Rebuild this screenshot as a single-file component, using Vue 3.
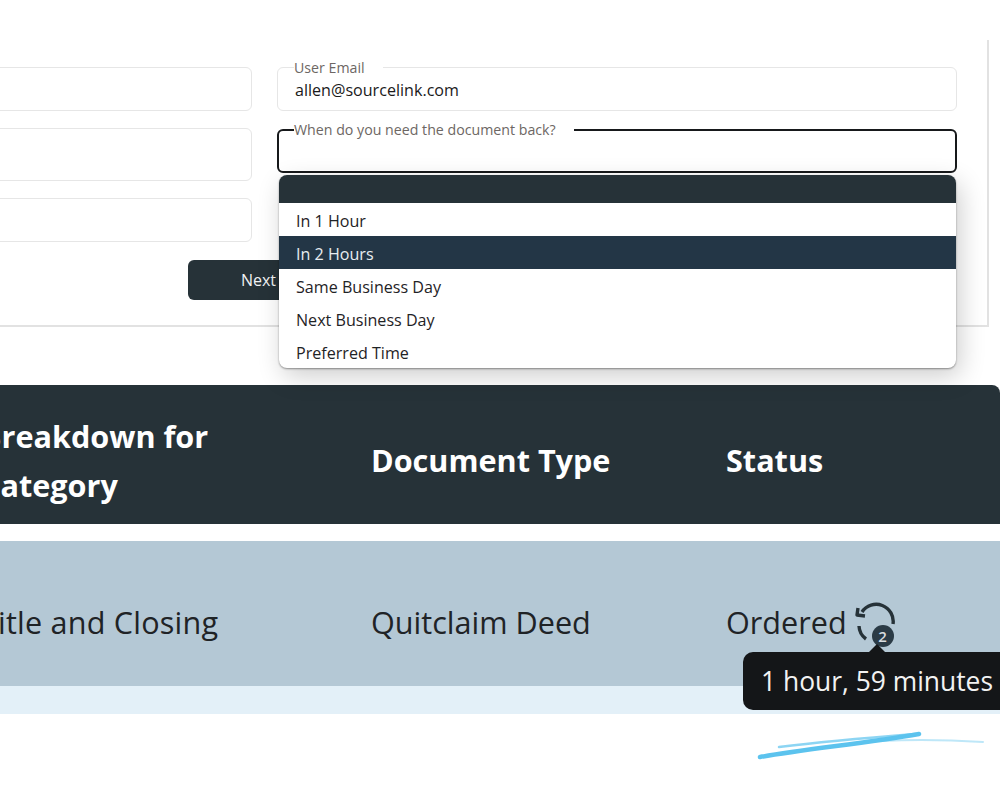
<script setup>
import { ref } from 'vue';

let opciones = ref(["", "In 1 Hour", "In 2 Hours", "Same Business Day", "Next Business Day", "Preferred Time"]);
let elegida = ref(2);
</script>

<template>
  <div class="page">
    <div class="card">
      <div class="col">
        <div class="field f1"></div>
        <div class="field f2"></div>
        <div class="field f3"></div>
      </div>
      <div class="col">
        <div class="field f1">
          <span class="label">User Email</span>
          <span class="value">allen@sourcelink.com</span>
        </div>
        <div class="field focus">
          <span class="label">When do you need the document back?</span>
          <ul class="menu">
            <li v-for="(op, index) in opciones" :key="index" :class="{ blank: op === '', active: index === elegida }">{{ op }}</li>
          </ul>
        </div>
      </div>
      <div class="actions">
        <button class="next">Next</button>
      </div>
    </div>

    <div class="table">
      <div class="row head">
        <div class="c1">Breakdown for<br>Category</div>
        <div class="c2">Document Type</div>
        <div class="c3">Status</div>
      </div>
      <div class="row body">
        <div class="c1 title">Title and Closing</div>
        <div class="c2">Quitclaim Deed</div>
        <div class="c3 status">
          Ordered
          <span class="icon">
            <svg width="46" height="46" viewBox="0 0 46 46" fill="none" stroke="#263238" stroke-width="3.4">
              <path d="M9 10 A17 17 0 0 1 40 22" />
              <path d="M6 24 A17 17 0 0 0 13 37" />
              <path d="M5 6 L4 13 L12 14" stroke-linejoin="round" />
            </svg>
            <span class="badge">2</span>
          </span>
          <div class="tooltip">1 hour, 59 minutes</div>
        </div>
      </div>
      <div class="stripe"></div>
    </div>

    <svg class="scribble" width="228" height="32" viewBox="0 0 228 32" fill="none" stroke="#5cc3ee" stroke-linecap="round">
      <path d="M3 27 C50 19 110 13 162 4" stroke-width="4.500" />
      <path d="M22 17 C70 11 120 7 158 4" stroke-width="2.500" opacity="0.7" />
      <path d="M125 11 C160 9 195 10 226 12" stroke-width="2" opacity="0.4" />
    </svg>
  </div>
</template>

<style scoped>
.page {
  width: 1000px;
  height: 800px;
  overflow: hidden;
  padding-top: 40px;
  box-sizing: border-box;
  background: #fff;
  font-family: "Open Sans", "Noto Sans", sans-serif;
  color: #1f2326;
}
.card {
  margin-left: -459px;
  width: 1448px;
  box-sizing: border-box;
  height: 287px;
  padding: 27px 31px 0;
  border-right: 2px solid #e2e2e2;
  border-bottom: 2px solid #e2e2e2;
  display: grid;
  grid-template-columns: 680px 680px;
  grid-template-rows: 193px 40px;
  column-gap: 25px;
}
.col {
  display: flex;
  flex-direction: column;
}
.field {
  position: relative;
  box-sizing: border-box;
  border: 1px solid #e6e6e6;
  border-radius: 6px;
  height: 44px;
}
.col .f1 { margin-bottom: 17px; }
.col .f2 { height: 53px; margin-bottom: 17px; }
.col .f1 + .focus { margin-top: 1px; }
.label {
  position: absolute;
  left: 16px;
  top: -9px;
  padding-right: 18px;
  background: #fff;
  font-size: 14.2px;
  line-height: 17px;
  color: #6d6764;
}
.value {
  position: absolute;
  left: 17px;
  top: 11px;
  font-size: 16.1px;
  line-height: 22px;
  color: #1a1a1a;
}
.focus {
  border: 2px solid #17191b;
}
.focus .label {
  left: 15px;
  top: -10px;
}
.menu {
  position: absolute;
  left: 0;
  top: 44px;
  width: 677px;
  margin: 0;
  padding: 0;
  list-style: none;
  background: #fff;
  border-radius: 8px;
  overflow: hidden;
  box-shadow: 0 1px 2px rgba(0, 0, 0, 0.4), 4px 8px 26px rgba(0, 0, 0, 0.2);
  z-index: 2;
}
.menu li {
  box-sizing: border-box;
  height: 33px;
  line-height: 33px;
  padding: 2px 0 0 17px;
  font-size: 16.1px;
  color: #1f2326;
}
.menu .blank {
  height: 28px;
  background: #263238;
}
.menu .active {
  background: #233646;
  color: #e8edf0;
}
.actions {
  grid-column: 1 / 3;
}
.next {
  margin-left: 616px;
  width: 141px;
  height: 40px;
  border: none;
  border-radius: 6px;
  background: #263238;
  color: #f1f3f4;
  font-family: inherit;
  font-size: 16px;
}
.table {
  margin-top: 58px;
}
.row {
  display: flex;
  align-items: center;
  box-sizing: border-box;
  font-size: 30.6px;
}
.c1 {
  margin-left: -19px;
  width: 390px;
  flex: none;
}
.title {
  letter-spacing: 0.2px;
}
.c2 {
  width: 355px;
  flex: none;
}
.head {
  height: 139px;
  padding-top: 12px;
  background: #263238;
  color: #fff;
  font-weight: 700;
  line-height: 49px;
  border-radius: 0 8px 0 0;
}
.body {
  margin-top: 17px;
  height: 145px;
  padding-top: 16px;
  background: #b4c8d5;
}
.status {
  position: relative;
  display: flex;
  align-items: center;
}
.icon {
  position: relative;
  margin-left: 6px;
  margin-top: 6px;
  width: 46px;
  height: 46px;
}
.icon svg {
  display: block;
}
.badge {
  position: absolute;
  left: 19px;
  top: 23px;
  width: 22px;
  height: 22px;
  border-radius: 50%;
  background: #2b3b46;
  color: #d8dde0;
  font-size: 15px;
  font-weight: 600;
  line-height: 22px;
  text-align: center;
}
.tooltip {
  position: absolute;
  left: 17px;
  top: 56px;
  width: 280px;
  height: 58px;
  box-sizing: border-box;
  padding-left: 18px;
  border-radius: 10px;
  background: #141618;
  color: #f2f2f2;
  font-size: 26.4px;
  line-height: 58px;
  white-space: nowrap;
}
.tooltip::before {
  content: "";
  position: absolute;
  left: 125px;
  top: -8px;
  border-left: 9px solid transparent;
  border-right: 9px solid transparent;
  border-bottom: 9px solid #141618;
}
.stripe {
  height: 28px;
  background: #e3f0f8;
}
.scribble {
  display: block;
  margin: 16px 0 0 757px;
}
</style>

<style>
body {
  overflow: hidden;
}
</style>
